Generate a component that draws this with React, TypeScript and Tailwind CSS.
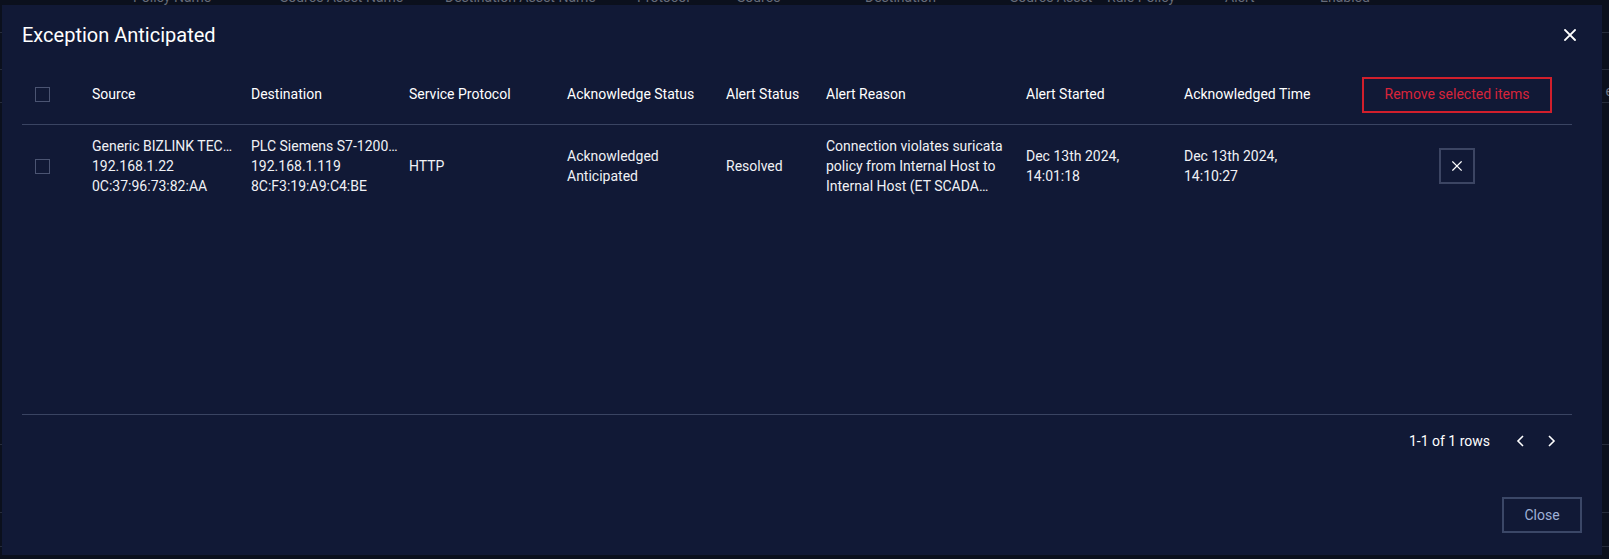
import React from "react";

const cols =
  "grid grid-cols-[70px_159px_158px_158px_159px_100px_200px_158px_158px_1fr]";

function XIcon({ size = 12, stroke = 2 }: { size?: number; stroke?: number }) {
  return (
    <svg width={size} height={size} viewBox="0 0 12 12" fill="none">
      <path d="M1 1 L11 11 M11 1 L1 11" stroke="#ffffff" strokeWidth={stroke} strokeLinecap="square" />
    </svg>
  );
}

function Chevron({ dir }: { dir: "left" | "right" }) {
  return (
    <svg width="9" height="12" viewBox="0 0 9 12" fill="none">
      {dir === "left" ? (
        <path d="M7 1 L2 6 L7 11" stroke="#ffffff" strokeWidth="1.6" />
      ) : (
        <path d="M2 1 L7 6 L2 11" stroke="#ffffff" strokeWidth="1.6" />
      )}
    </svg>
  );
}

function Checkbox() {
  return <div className="ml-[13px] h-[15px] w-[15px] border border-[#4b5472]" />;
}

export default function App() {
  return (
    <div
      className="relative h-[559px] w-[1609px] overflow-hidden bg-[#0b101d]"
      style={{ fontFamily: "Roboto, 'Liberation Sans', sans-serif" }}
    >
      {/* background page (mostly hidden behind the modal) */}
      <div className="flex flex-col">
        <div className="-mt-[11px] flex h-[44px] items-start border-b border-[#262c3b] pl-[133px] text-[14px] leading-[16px] text-[#666b79]">
          <span className="w-[147px]">Policy Name</span>
          <span className="w-[165px]">Source Asset Name</span>
          <span className="w-[192px]">Destination Asset Name</span>
          <span className="w-[100px]">Protocol</span>
          <span className="w-[128px]">Source</span>
          <span className="w-[145px]">Destination</span>
          <span className="w-[97px]">Source Asset</span>
          <span className="w-[118px]">Rule Policy</span>
          <span className="w-[95px]">Alert</span>
          <span>Enabled</span>
        </div>
        <div className="h-[37px] border-b border-[#262c3b]" />
        <div className="flex h-[33px] items-end justify-end border-b border-[#262c3b] text-[14px] text-[#6f7482]">
          <span className="-mr-[4px]">e</span>
        </div>
        <div className="h-[342px] border-b border-[#262c3b]" />
        <div className="h-[68px] border-b border-[#262c3b]" />
        <div className="h-[34px] border-b border-[#262c3b]" />
      </div>

      {/* modal overlay */}
      <div className="absolute left-[2px] top-[5px] flex h-[550px] w-[1600px] flex-col bg-[#111936] px-[20px] text-[14px]">
        <div className="flex items-center justify-between pt-[16px]">
          <h2 className="text-[20px] font-normal leading-[28px] text-white">Exception Anticipated</h2>
          <button className="flex h-[24px] w-[24px] items-center justify-center">
            <XIcon size={12} stroke={1.8} />
          </button>
        </div>

        <div className="mr-[10px] mt-[16px] flex flex-col">
          {/* header */}
          <div className={`${cols} h-[60px] items-center border-b border-[#3a4462] text-white`}>
            <div>
              <Checkbox />
            </div>
            <div>Source</div>
            <div>Destination</div>
            <div>Service Protocol</div>
            <div>Acknowledge Status</div>
            <div>Alert Status</div>
            <div>Alert Reason</div>
            <div>Alert Started</div>
            <div>Acknowledged Time</div>
            <div className="flex justify-center">
              <button className="h-[36px] w-[190px] border-2 border-[#d11f2c] text-[14px] text-[#d8243a]">
                Remove selected items
              </button>
            </div>
          </div>

          {/* body */}
          <div className="h-[290px] border-b border-[#3a4462]">
            <div className={`${cols} items-center pb-[11px] pt-[11px] leading-[20px] text-[#f0f1f5]`}>
              <div>
                <Checkbox />
              </div>
              <div className="min-w-0 pr-[10px]">
                <div className="truncate">Generic BIZLINK TECHNOLOGY</div>
                <div>192.168.1.22</div>
                <div>0C:37:96:73:82:AA</div>
              </div>
              <div className="min-w-0 pr-[6px]">
                <div className="truncate">PLC Siemens S7-1200CPU</div>
                <div>192.168.1.119</div>
                <div>8C:F3:19:A9:C4:BE</div>
              </div>
              <div className="pr-[12px]">HTTP</div>
              <div className="pr-[12px]">
                <div>Acknowledged</div>
                <div>Anticipated</div>
              </div>
              <div className="pr-[12px]">Resolved</div>
              <div className="pr-[12px]">
                <div className="line-clamp-3">
                  Connection violates suricata policy from Internal Host to Internal Host (ET SCADA Modbus
                  Function Code Read Coils)
                </div>
              </div>
              <div className="pr-[12px]">
                <div>Dec 13th 2024,</div>
                <div>14:01:18</div>
              </div>
              <div className="pr-[12px]">
                <div>Dec 13th 2024,</div>
                <div>14:10:27</div>
              </div>
              <div className="flex justify-center">
                <button className="flex h-[36px] w-[36px] items-center justify-center border-2 border-[#3c4563]">
                  <XIcon size={10} stroke={1.5} />
                </button>
              </div>
            </div>
          </div>

          {/* pagination */}
          <div className="flex h-[52px] items-center justify-end pr-[5px] text-white">
            <span className="mr-[15px]">1-1 of 1 rows</span>
            <button className="flex h-[31px] w-[31px] items-center justify-center">
              <Chevron dir="left" />
            </button>
            <button className="flex h-[31px] w-[31px] items-center justify-center">
              <Chevron dir="right" />
            </button>
          </div>
        </div>

        <div className="mb-[22px] mt-auto flex justify-end">
          <button className="h-[36px] w-[80px] border-2 border-[#3b4767] text-[14px] text-[#9fb0d8]">Close</button>
        </div>
      </div>
    </div>
  );
}
